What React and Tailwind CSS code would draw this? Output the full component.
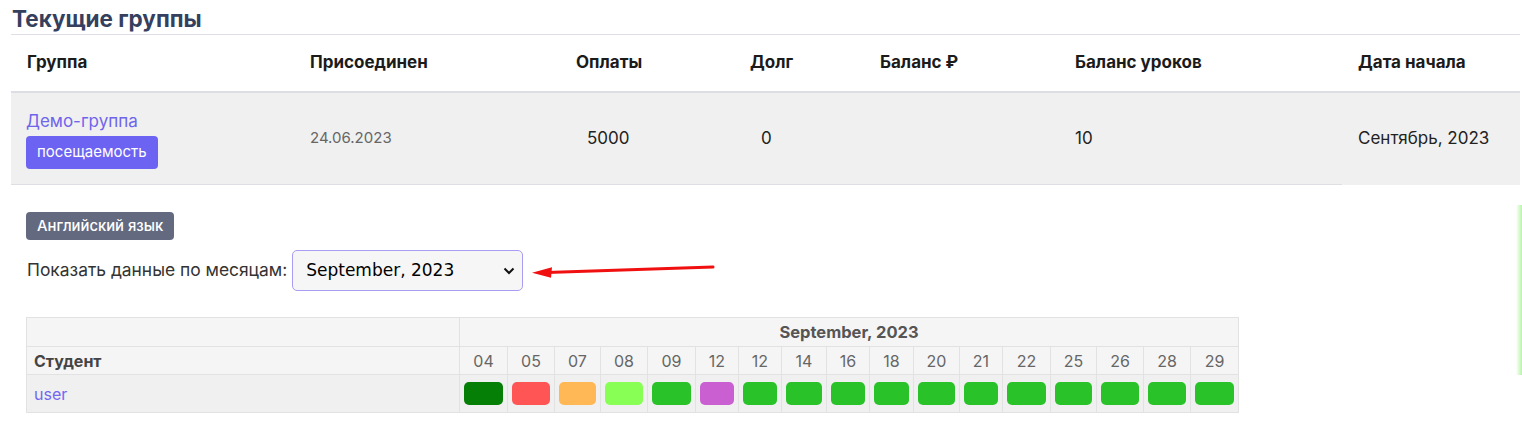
const groupCols = [
  { title: "Группа", w: "w-[283px]" },
  { title: "Присоединен", w: "w-[266px]" },
  { title: "Оплаты", w: "w-[174px]" },
  { title: "Долг", w: "w-[130px]" },
  { title: "Баланс ₽", w: "w-[195px]" },
  { title: "Баланс уроков", w: "w-[283px]" },
  { title: "Дата начала", w: "flex-1" },
];

const days = [
  { d: "04", w: "w-[48px]", c: "bg-[#067f06]" },
  { d: "05", w: "w-[47px]", c: "bg-[#ff5555]" },
  { d: "07", w: "w-[46px]", c: "bg-[#ffb855]" },
  { d: "08", w: "w-[47px]", c: "bg-[#88ff55]" },
  { d: "09", w: "w-[48px]", c: "bg-[#29c229]" },
  { d: "12", w: "w-[43px]", c: "bg-[#c95fd0]" },
  { d: "12", w: "w-[43px]", c: "bg-[#29c229]" },
  { d: "14", w: "w-[45px]", c: "bg-[#29c229]" },
  { d: "16", w: "w-[43px]", c: "bg-[#29c229]" },
  { d: "18", w: "w-[44px]", c: "bg-[#29c229]" },
  { d: "20", w: "w-[46px]", c: "bg-[#29c229]" },
  { d: "21", w: "w-[43px]", c: "bg-[#29c229]" },
  { d: "22", w: "w-[48px]", c: "bg-[#29c229]" },
  { d: "25", w: "w-[46px]", c: "bg-[#29c229]" },
  { d: "26", w: "w-[47px]", c: "bg-[#29c229]" },
  { d: "28", w: "w-[47px]", c: "bg-[#29c229]" },
  { d: "29", w: "w-[48px]", c: "bg-[#29c229]" },
];

function GroupsTable() {
  return (
    <div className="ml-[11px] mr-[2px] border-t border-[#dfe0e6]">
      {/* header */}
      <div className="flex h-[58px] items-center border-b-2 border-[#dcdee3]">
        {groupCols.map((c) => (
          <div key={c.title} className={`${c.w} pl-[16px] text-[17px] font-bold text-[#1b1b1b]`}>
            {c.title}
          </div>
        ))}
      </div>
      {/* row */}
      <div className="flex h-[92px] bg-[#f0f0f0] text-[17px] text-[#222]">
        <div className="w-[283px] pl-[15px] pt-[17px] border-b border-[#dedfe4]">
          <div className="text-[#6f64ec] leading-[22px]">Демо-группа</div>
          <button className="mt-[4px] h-[33px] rounded-[4px] bg-[#6c63f2] px-[11px] text-[15px] text-white">
            посещаемость
          </button>
        </div>
        <div className="w-[266px] pl-[16px] flex items-center border-b border-[#dedfe4] text-[15px] text-[#666]">
          24.06.2023
        </div>
        <div className="w-[174px] pl-[27px] flex items-center border-b border-[#dedfe4]">5000</div>
        <div className="w-[130px] pl-[27px] flex items-center border-b border-[#dedfe4]">0</div>
        <div className="w-[195px] border-b border-[#dedfe4]"></div>
        <div className="w-[283px] pl-[16px] flex items-center border-b border-[#dedfe4]">10</div>
        <div className="flex-1 pl-[16px] flex items-center">Сентябрь, 2023</div>
      </div>
    </div>
  );
}

function Attendance() {
  return (
    <table className="ml-[26px] mt-[26px] border-collapse table-fixed text-[16px]">
      <thead>
        <tr className="h-[29px] bg-[#f5f5f5]">
          <th className="w-[433px] border border-[#e2e2e2]"></th>
          <th colSpan={days.length} className="border border-[#e2e2e2] text-[16.5px] font-bold text-[#555]">
            September, 2023
          </th>
        </tr>
        <tr className="h-[28px] bg-[#f5f5f5]">
          <th className="border border-[#e2e2e2] pl-[7px] text-left font-bold text-[#444]">Студент</th>
          {days.map((x, i) => (
            <th key={i} className={`${x.w} border border-[#e2e2e2] font-normal text-[#666]`}>
              {x.d}
            </th>
          ))}
        </tr>
      </thead>
      <tbody>
        <tr className="h-[38px] bg-[#f0f0f0]">
          <td className="border border-[#e2e2e2] pl-[7px] text-[#7367f0]">user</td>
          {days.map((x, i) => (
            <td key={i} className="border border-[#e2e2e2] px-[4px]">
              <div className={`h-[23px] rounded-[5px] ${x.c}`}></div>
            </td>
          ))}
        </tr>
      </tbody>
    </table>
  );
}

export default function App() {
  return (
    <div className="relative w-[1522px] h-[432px] overflow-hidden bg-white font-['Inter',sans-serif]">
      <h2 className="h-[34px] pl-[12px] pt-[5px] text-[22.5px] font-bold leading-[28px] text-[#34405e]">
        Текущие группы
      </h2>
      <GroupsTable />

      <div className="ml-[26px] mt-[27px] flex h-[28px] w-fit items-center rounded-[4px] bg-[#636a80] px-[11px] text-[14.8px] text-white font-medium">
        Английский язык
      </div>

      <div className="ml-[27px] mt-[10px] flex items-center">
        <span className="text-[17.4px] text-[#333]">Показать данные по месяцам:</span>
        <div className="ml-[5px] flex h-[41px] w-[231px] items-center justify-between rounded-[5px] border border-[#a79df2] bg-[#f6f6f6] pl-[13px] pr-[7px]">
          <span className="font-['DejaVu_Sans',sans-serif] text-[17px] text-black">September, 2023</span>
          <svg width="12" height="8" viewBox="0 0 12 8">
            <path d="M1.5 1.5 L6 6 L10.5 1.5" fill="none" stroke="#111" strokeWidth="2" />
          </svg>
        </div>
        <svg className="ml-[8px]" width="184" height="14" viewBox="0 0 184 14">
          <line x1="16" y1="8.4" x2="182" y2="3" stroke="#f01010" strokeWidth="3" strokeLinecap="round" />
          <polygon points="1,8.8 21,3.3 20,13.8" fill="#f01010" />
        </svg>
      </div>

      <Attendance />

      {/* green glow from an offscreen element */}
      <div className="absolute right-0 top-[205px] h-[170px] w-[6px] bg-gradient-to-r from-transparent to-[#b6f5a8]"></div>
    </div>
  );
}
